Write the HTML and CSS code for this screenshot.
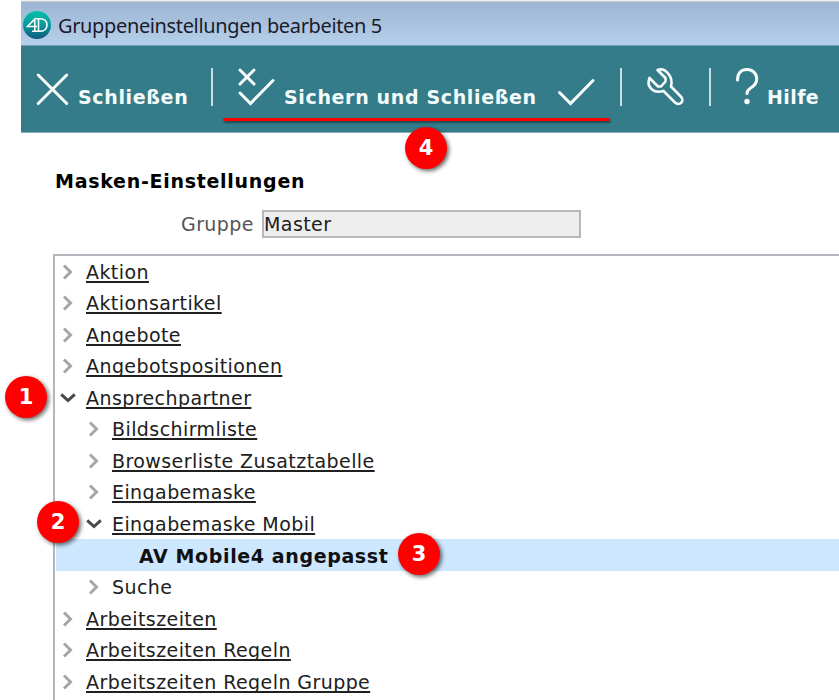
FILE: index.html
```html
<!DOCTYPE html>
<html lang="de">
<head>
<meta charset="utf-8">
<title>Gruppeneinstellungen bearbeiten 5</title>
<link rel="stylesheet" href="styles.css">
</head>
<body>
<svg width="0" height="0" class="defs">
  <defs>
    <symbol id="right" viewBox="0 0 16 16"><path d="M4 1.500 10.500 8l-6.500 6.500" fill="none" stroke="#a6a6a6" stroke-width="3"/></symbol>
    <symbol id="down" viewBox="0 0 16 16"><path d="M1.200 4.300 8 10.500l6.800-6.200" fill="none" stroke="#484848" stroke-width="3"/></symbol>
  </defs>
</svg>
<div class="window">
  <header class="titlebar">
    <svg class="logo" viewBox="0 0 28 28">
      <defs><linearGradient id="lg" x1="0" y1="0" x2="0" y2="1"><stop offset="0" stop-color="#00c0ad"/><stop offset=".5" stop-color="#08989b"/><stop offset="1" stop-color="#12587c"/></linearGradient></defs>
      <circle cx="14" cy="14" r="14" fill="url(#lg)"/>
      <path d="M11.800 20V8L4.500 15.500H14M9 20.300h7.500c4.500 0 7.500-2.500 7.500-6.300 0-4-3-6.200-7.500-6.200H13M15.500 8v12" fill="none" stroke="#fff" stroke-width="1.600"/>
    </svg>
    <span class="title">Gruppeneinstellungen bearbeiten 5</span>
  </header>
  <nav class="toolbar">
    <svg class="icon" viewBox="0 0 36 44"><path d="m1.200 7 28.500 28.500M29.700 7l-28.500 28.500"/></svg>
    <span class="close">Schließen</span>
    <i class="sep"></i>
    <svg class="icon" viewBox="0 0 36 44"><path d="M2 2l14 14M16 2 2 16M2 25l10.500 10.500L35 12.500"/></svg>
    <span class="save">Sichern und Schließen</span>
    <svg class="icon" viewBox="0 0 36 44"><path d="M1.500 24.500 12.500 35.500 35 12.500"/></svg>
    <i class="sep"></i>
    <svg class="icon wrench" viewBox="0 0 36 44"><path d="M10.500 2 18.500 10v3.500L14 18.500h-3L2.500 10C.8 14 1.500 18.500 5 21.500c3 2.500 6.500 2.800 11.500 1.500L28 34.500c2 2 4.800 1.800 6.300.2s1.500-4.200-.5-6.200L24 18.500c1-4 .5-9-2.500-12.500C18.500 2 14.500.5 10.500 2Z"/></svg>
    <i class="sep"></i>
    <svg class="icon" viewBox="0 0 36 44"><path d="M1.500 12C1.500 5 5.500 1.500 11 1.500s9.700 4 9.700 9.500c0 5-2.700 7-6 9-2.700 1.600-3.700 2.500-3.700 5.500"/><circle cx="11" cy="33.500" r="2.700"/></svg>
    <span class="help">Hilfe</span>
  </nav>
</div>
<main class="content">
  <h1>Masken-Einstellungen</h1>
  <div class="field"><label>Gruppe</label><div class="input">Master</div></div>
  <div class="tree">
    <div class="row"><svg><use href="#right"/></svg><u>Aktion</u></div>
    <div class="row"><svg><use href="#right"/></svg><u>Aktionsartikel</u></div>
    <div class="row"><svg><use href="#right"/></svg><u>Angebote</u></div>
    <div class="row"><svg><use href="#right"/></svg><u>Angebotspositionen</u></div>
    <div class="row"><svg><use href="#down"/></svg><u>Ansprechpartner</u></div>
    <div class="row sub"><svg><use href="#right"/></svg><u>Bildschirmliste</u></div>
    <div class="row sub"><svg><use href="#right"/></svg><u>Browserliste Zusatztabelle</u></div>
    <div class="row sub"><svg><use href="#right"/></svg><u>Eingabemaske</u></div>
    <div class="row sub"><svg><use href="#down"/></svg><u>Eingabemaske Mobil</u></div>
    <div class="row selected"><b>AV Mobile4 angepasst</b></div>
    <div class="row sub"><svg><use href="#right"/></svg><span>Suche</span></div>
    <div class="row"><svg><use href="#right"/></svg><u>Arbeitszeiten</u></div>
    <div class="row"><svg><use href="#right"/></svg><u>Arbeitszeiten Regeln</u></div>
    <div class="row"><svg><use href="#right"/></svg><u>Arbeitszeiten Regeln Gruppe</u></div>
  </div>
</main>
<div class="underline"></div>
<div class="badge one">1</div>
<div class="badge two">2</div>
<div class="badge three">3</div>
<div class="badge four">4</div>
</body>
</html>
```

FILE: styles.css
```css
* { box-sizing: border-box; }
body { margin: 0; position: relative; width: 839px; height: 700px; overflow: hidden; background: #fff; color: #202020; font: 19px/24px "DejaVu Sans", Verdana, sans-serif; letter-spacing: 0.42px; }
.defs { position: absolute; }
.window { margin-left: 21px; border-top: 1px solid #f0f0f0; }
.titlebar { height: 45px; display: flex; align-items: center; padding: 3px 0 0 2px; border-top: 1px solid #c4cdd6; border-bottom: 1px solid #739fb3; background: linear-gradient(#9cb5d2, #b6cfea); }
.logo { width: 28px; height: 28px; margin-right: 7px; }
.title { font: 20px/28px "Noto Sans", "Open Sans", sans-serif; color: #1b1b2b; white-space: nowrap; letter-spacing: -0.36px; padding-top: 1px; }
.toolbar { height: 87px; padding-top: 22px; border-bottom: 1px solid #83afb7; background: #347c89; color: #f4fbfb; font-weight: bold; display: grid; grid-template-columns: 16px 41px 133px 27px 46px 274px 62px 27px 62px 27px 32px 1fr; align-items: start; white-space: nowrap; }
.toolbar > :first-child { grid-column: 2; }
.icon { width: 36px; height: 44px; overflow: visible; fill: none; stroke: #f8fcfc; stroke-width: 3; stroke-linecap: round; }
.icon circle { fill: #f8fcfc; stroke: none; }
.wrench { stroke-width: 2.6; stroke-linejoin: round; }
.toolbar span { font-size: 19px; line-height: 24px; margin-top: 17px; letter-spacing: 0.65px; }
.toolbar .help { letter-spacing: 0.4px; margin-left: -1px; }
.sep { width: 2px; height: 38px; background: #c9dfe2; }
.content { padding-left: 53px; }
h1 { margin: 36px 0 0 2px; font-size: 19px; line-height: 24px; color: #000; letter-spacing: 0.72px; }
.field { display: flex; align-items: center; height: 28px; margin: 17px 0 0 128px; color: #555; }
.field label { width: 81px; }
.input { width: 319px; height: 28px; border: 2px solid #b6b6bd; background: #eee; color: #202020; line-height: 24px; }
.tree { margin-top: 16px; height: 450px; border: solid #b5b5bd; border-width: 2px 0 0 2px; padding: 0 0 0 1px; }
.row { display: flex; align-items: center; height: 31.54px; padding-left: 4px; white-space: nowrap; }
.row svg { width: 16px; height: 16px; margin-right: 10px; flex: none; }
.sub { padding-left: 30px; }
.row u { text-decoration-thickness: 1.5px; text-underline-offset: 2px; text-decoration-skip-ink: none; }
.selected { background: #cde7ff; padding-left: 83px; color: #101010; box-shadow: 0 -1px #cde7ff; }
.selected b { letter-spacing: 0.62px; }
.underline { position: absolute; left: 223px; top: 118px; width: 387px; height: 3px; border-radius: 2px; background: #f00; box-shadow: 1px 2px 2px rgba(0,0,0,.4); }
.badge { position: absolute; width: 42px; height: 42px; border-radius: 50%; background: #f00; color: #fff; font: bold 21px/42px "DejaVu Sans", sans-serif; letter-spacing: 0; text-align: center; box-shadow: 2px 2px 4px rgba(0,0,0,.6); }
.one { left: 5px; top: 376px; }
.two { left: 37px; top: 501px; }
.three { left: 398px; top: 533px; }
.four { left: 405px; top: 127px; }
```
